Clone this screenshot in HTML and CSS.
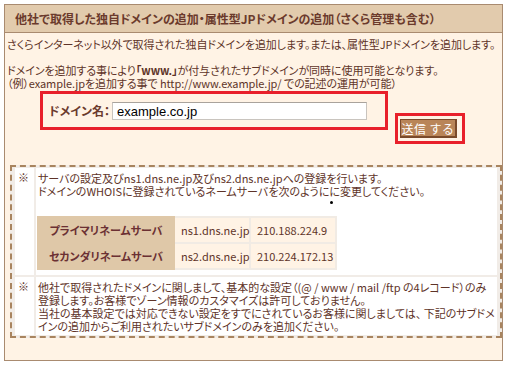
FILE: index.html
```html
<!DOCTYPE html>
<html lang="ja">
<head>
<meta charset="utf-8">
<title>独自ドメインの追加</title>
<link rel="stylesheet" href="styles.css">
</head>
<body>
<div class="panel">
  <div class="panel-head">
    <h2 class="panel-title">他社で取得した独自ドメインの追加・属性型JPドメインの追加（さくら管理も含む）</h2>
  </div>
  <div class="panel-body">
    <p class="intro">さくらインターネット以外で取得された独自ドメインを追加します。または、属性型JPドメインを追加します。<br><br>ドメインを追加する事により<b class="www">「www.」</b>が付与されたサブドメインが同時に使用可能となります。<br>（例）example.jpを追加する事で http://www.example.jp/ での記述の運用が可能）</p>
    <form class="add-form" onsubmit="return false">
      <div class="field-box">
        <label class="field-label" for="domain">ドメイン名：</label>
        <input class="field-input" id="domain" type="text" value="example.co.jp">
      </div>
      <div class="btn-box">
        <button class="submit-btn" type="submit">送信 する</button>
      </div>
    </form>
    <div class="notes">
      <span class="cursor-dot"></span>
      <table class="notes-table">
        <tr>
          <td class="mark">※</td>
          <td class="note note-first">サーバの設定及びns1.dns.ne.jp及びns2.dns.ne.jpへの登録を行います。<br>ドメインのWHOISに登録されているネームサーバを次のようにに変更してください。
            <table class="ns-table">
              <tr><th>プライマリネームサーバ</th><td class="ns-host">ns1.dns.ne.jp</td><td class="ns-ip">210.188.224.9</td></tr>
              <tr><th>セカンダリネームサーバ</th><td class="ns-host">ns2.dns.ne.jp</td><td class="ns-ip">210.224.172.13</td></tr>
            </table>
          </td>
        </tr>
        <tr>
          <td class="mark">※</td>
          <td class="note note-last">他社で取得されたドメインに関しまして、基本的な設定（(@ / www / mail /ftp の4レコード）のみ<br>登録します。お客様でゾーン情報のカスタマイズは許可しておりません。<br>当社の基本設定では対応できない設定をすでにされているお客様に関しましては、 下記のサブドメ<br>インの追加からご利用されたいサブドメインのみを追加ください。</td>
        </tr>
      </table>
    </div>
  </div>
</div>
</body>
</html>
```
FILE: styles.css
```css
* { box-sizing: border-box; }
html, body { margin: 0; padding: 0; background: #ffffff; }
body {
  font-family: "Noto Sans CJK JP", "Noto Sans", sans-serif;
  font-size: 11px;
  line-height: 13px;
  color: #5e3328;
  font-feature-settings: "palt";
}
.panel {
  margin: 4px 0 0 4px;
  width: 499px;
  height: 357px;
  border: 1px solid #a98b70;
  background: #fff3e5;
}
.panel-head {
  height: 28px;
  background: #e2cbad;
  border-bottom: 1px solid #a98b70;
  display: flex;
  align-items: center;
  padding-left: 10px;
}
.panel-title {
  margin: 0;
  font-size: 12px;
  font-weight: bold;
  color: #6b3a2c;
  white-space: nowrap;
}
.panel-body { padding: 5px 2px 0 2px; }
.intro { margin: 0; white-space: nowrap; letter-spacing: -0.08px; }
.www { color: #5e3328; }
.add-form {
  display: flex;
  align-items: flex-start;
  margin: 1px 0 0 33px;
}
.field-box {
  width: 348px;
  height: 39px;
  border: 3px solid #e8202b;
  display: flex;
  align-items: flex-start;
  padding: 8px 0 0 6px;
}
.field-label {
  flex: 0 0 63px;
  font-size: 12px;
  font-weight: bold;
  color: #6b3a2c;
  line-height: 18px;
  white-space: nowrap;
}
.field-input {
  flex: 0 0 255px;
  width: 255px;
  height: 18px;
  margin: 0;
  padding: 0 4px;
  border: 1px solid #c9c4be;
  border-top-color: #a9a39c;
  background: #ffffff;
  font-family: "Liberation Sans", Arial, sans-serif;
  font-size: 13px;
  color: #000000;
}
.btn-box {
  margin: 22px 0 0 7px;
  width: 70px;
  height: 31px;
  border: 3px solid #e8202b;
  padding: 3px 0 0 2px;
}
.submit-btn {
  width: 57px;
  height: 19px;
  margin: 0;
  padding: 0;
  background: #b98558;
  border: 1px solid #7a4a2a;
  border-right-width: 2px;
  border-bottom-width: 2px;
  color: #ffffff;
  font-family: "Noto Sans CJK JP", sans-serif;
  font-size: 12px;
  line-height: 15px;
  letter-spacing: 0.5px;
}
.notes {
  position: relative;
  margin: 21px 0 0 3px;
  width: 492px;
  border: 2px dashed #a8845f;
  background: #f1ece7;
  padding: 1px;
}
.cursor-dot {
  position: absolute;
  left: 318px;
  top: 34px;
  width: 3px;
  height: 3px;
  border-radius: 50%;
  background: #000;
}
.notes-table {
  width: 100%;
  border-collapse: separate;
  border-spacing: 2px 2px;
  margin: -2px 0;
}
.notes-table td { background: #ffffff; vertical-align: top; }
.mark { width: 19px; padding: 3px 0 0 3px; }
.note { padding: 4px 0 4px 2px; white-space: nowrap; }
.note-first { padding-bottom: 5px; }
.note-last { padding-bottom: 2px; }
.ns-table {
  margin-top: 18px;
  margin-left: -1px;
  border: 2px dashed #a8845f;
  border-collapse: collapse;
  table-layout: fixed;
  width: 300px;
}
.ns-table th {
  width: 136px;
  height: 26px;
  background: #dfc8a8;
  color: #6b3033;
  font-size: 11px;
  font-weight: bold;
  border: 2px solid #dfc8a8;
  text-align: center;
  padding: 0;
}
.ns-table td {
  background: #fff3e5;
  border: 2px solid #f1ebe4;
  padding: 0 0 0 6px;
  height: 26px;
  color: #5e3328;
  vertical-align: middle;
}
.ns-table .ns-host { width: 76px; }
.ns-table .ns-ip { width: 86px; }
```
